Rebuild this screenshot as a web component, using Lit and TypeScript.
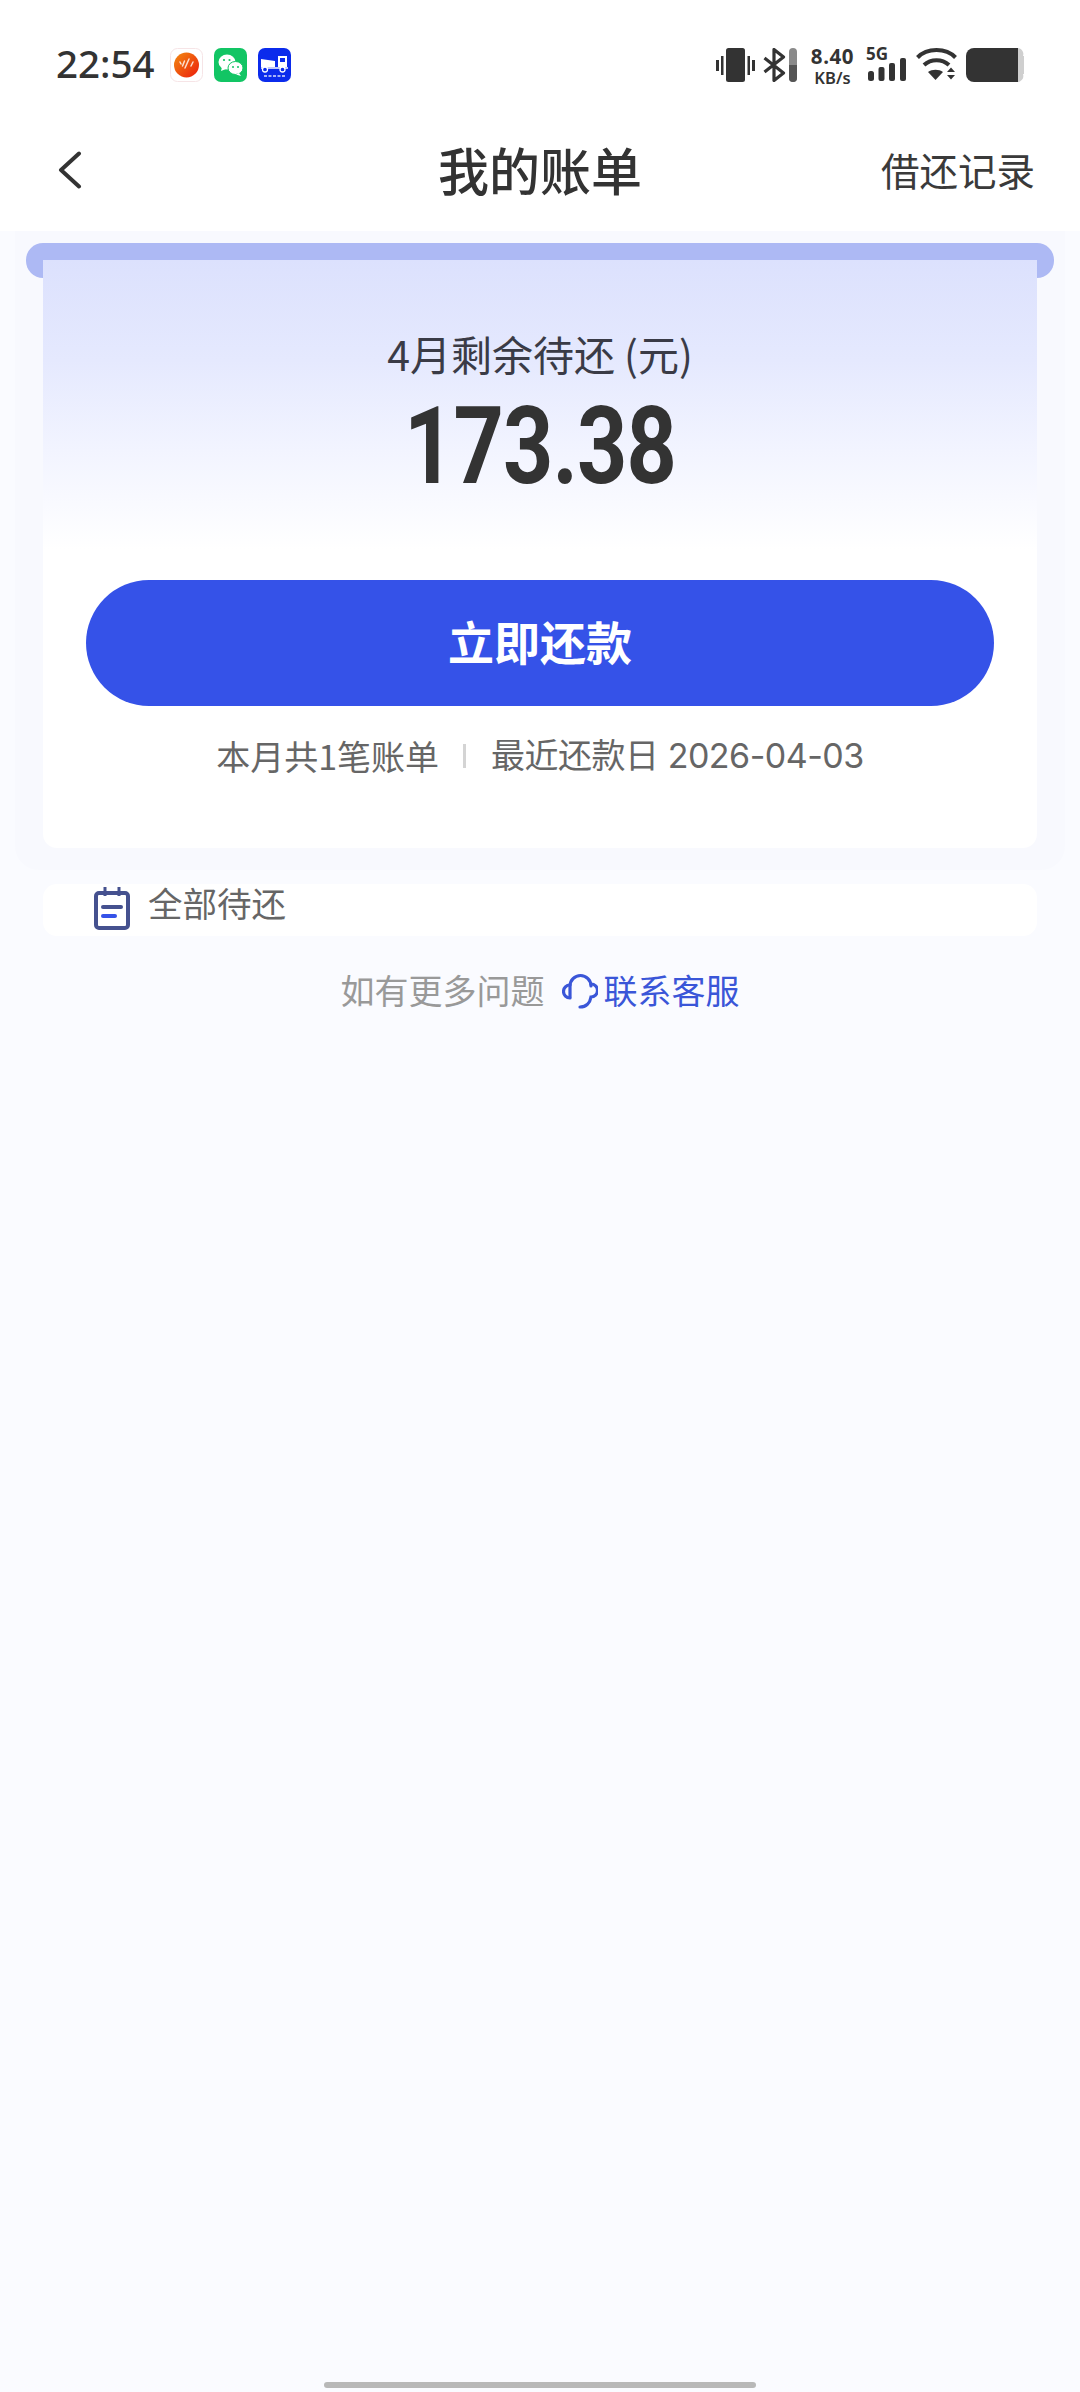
import { LitElement, html, css } from "lit";
import { customElement } from "lit/decorators.js";

@customElement("app-root")
export class AppRoot extends LitElement {
  static styles = css`
    :host { display: block; width: 1080px; height: 2392px; overflow: hidden; background: #fafbff; color: #333; font-family: "Noto Sans CJK SC", "Noto Sans", sans-serif; }
    * { box-sizing: border-box; }
    svg { display: block; flex: none; }
    .page { height: 2392px; display: flex; flex-direction: column; }
    .top { height: 231px; background: #fff; flex: none; }
    .status { height: 130px; padding: 48px 56px 0 56px; display: flex; align-items: flex-start; }
    .time { font-family: "Noto Sans", sans-serif; font-size: 38.500px; font-weight: 500; line-height: 30px; width: 114px; color: #333; }
    .apps { display: flex; gap: 11px; }
    .sys { margin-left: auto; display: flex; align-items: flex-start; }
    .speed { width: 45px; margin: 0 13px 0 13px; display: flex; flex-direction: column; align-items: center; font-family: "Noto Sans", sans-serif; font-weight: 700; color: #333; }
    .speed .a { font-size: 20.500px; line-height: 16px; letter-spacing: .6px; }
    .speed .b { font-size: 16.500px; line-height: 18px; margin-top: 5px; font-weight: 600; }
    .net { position: relative; width: 38px; height: 34px; }
    .net .g { position: absolute; left: -2px; top: -3px; font-family: "Noto Sans", sans-serif; font-size: 17px; line-height: 18px; font-weight: 700; }
    .net svg { position: absolute; left: 0; bottom: 1px; }
    .nav { height: 84px; padding: 0 45px 0 58px; display: flex; align-items: center; position: relative; }
    .title { position: absolute; left: 0; right: 0; top: 0; text-align: center; font-size: 51px; line-height: 78px; font-weight: 500; color: #333; }
    .link { margin-left: auto; font-size: 38.500px; line-height: 78px; margin-bottom: 6px; color: #3a3a3a; }
    .panel { margin: 0 15px; padding: 12px 13px 0; height: 639px; background: #f8f9fe; border-radius: 0 0 24px 24px; flex: none; }
    .roll { height: 35px; margin: 0 -2px; background: #adb9f4; border-radius: 17px; }
    .card { margin: -18px 15px 0; padding: 68px 0 68px; height: 588px; background: linear-gradient(180deg, #dce1fd 0, #e5e9fe 100px, #f2f4ff 190px, #fff 290px); border-radius: 0 0 14px 14px; position: relative; display: flex; flex-direction: column; align-items: center; }
    .label { font-size: 41px; line-height: 50px; color: #3a3b46; white-space: pre; }
    .amount { margin-top: 24px; height: 87px; font-family: Roboto, sans-serif; font-size: 107px; line-height: 90px; font-weight: 700; color: #333; transform: scaleX(.82); letter-spacing: -1px; }
    .pay { margin-top: 91px; width: 908px; height: 126px; flex: none; border-radius: 63px; background: #3552e8; color: #fff; display: flex; align-items: center; justify-content: center; font-size: 46px; font-weight: 700; line-height: 120px; padding-bottom: 7px; }
    .sub { margin-top: 25px; display: flex; align-items: center; font-size: 34px; line-height: 50px; color: #666; }
    .sep { width: 3px; height: 24px; margin: 0 25px 0 24px; background: #d4d4d4; }
    .date { font-family: Inter, "Noto Sans CJK SC", sans-serif; letter-spacing: -.5px; }
    .bills { margin: 14px 43px 0; height: 52px; background: #fff; border-radius: 14px; padding-left: 51px; display: flex; align-items: flex-start; flex: none; }
    .bills svg { margin-top: 3px; }
    .bills span { margin-left: 18px; font-size: 34.500px; line-height: 37px; color: #666; }
    .help { margin-top: 29px; display: flex; align-items: center; justify-content: center; font-size: 34px; line-height: 50px; color: #999; flex: none; }
    .help svg { margin: 2px 6px 0 17px; }
    .help b { font-weight: 400; color: #3a56d8; }
    .home { margin: auto 324px 4px; height: 6px; border-radius: 3px; background: #b8b8b8; flex: none; }
  `;

  render() {
    return html`<div class="page">
      <div class="top">
        <div class="status">
          <div class="time">22:54</div>
          <div class="apps">
            <svg width="33" height="34" viewBox="0 0 33 34"><defs><linearGradient id="o" x1="0" y1="0" x2="1" y2="1"><stop offset="0" stop-color="#f28a10"/><stop offset="1" stop-color="#ec1c0c"/></linearGradient></defs><rect x=".5" y=".5" width="32" height="33" rx="7" fill="#fff" stroke="#f6e4e6"/><circle cx="16.500" cy="17" r="12.500" fill="url(#o)"/><path d="M10 14l1 2M14.500 13l-2 5M19 11l-4 9M23 14l-2 4" stroke="#fff" stroke-width="1.500" stroke-linecap="round" opacity=".8"/></svg>
            <svg width="33" height="34" viewBox="0 0 33 34"><rect width="33" height="34" rx="7" fill="#12c564"/><ellipse cx="13" cy="14" rx="8.500" ry="7.500" fill="#fff"/><path d="M8 19l-1 4 5-2z" fill="#fff"/><ellipse cx="21.500" cy="20" rx="7.500" ry="6.500" fill="#fff" stroke="#12c564" stroke-width="1"/><path d="M25 25l2 3-5-1.500z" fill="#fff"/><circle cx="10" cy="12" r="1.100" fill="#12c564"/><circle cx="15.500" cy="12" r="1.100" fill="#12c564"/><circle cx="19" cy="19" r="1" fill="#12c564"/><circle cx="24" cy="19" r="1" fill="#12c564"/></svg>
            <svg width="33" height="34" viewBox="0 0 33 34"><rect width="33" height="34" rx="7" fill="#0b2bec"/><path d="M3 11l14 2v6H3zM20 8h9v11H20z" fill="#fff"/><path d="M22 10h5v4h-5z" fill="#0b2bec"/><path d="M3 20h27" stroke="#fff" stroke-width="1.500"/><circle cx="7" cy="21.500" r="2.500" fill="#0b2bec" stroke="#fff" stroke-width="1.300"/><circle cx="24.500" cy="21.500" r="2.500" fill="#0b2bec" stroke="#fff" stroke-width="1.300"/><path d="M6 28h21" stroke="#fff" stroke-width="1.500" stroke-dasharray="3 1.500" opacity=".85"/></svg>
          </div>
          <div class="sys">
            <svg width="39" height="34" viewBox="0 0 39 34" fill="#333"><rect x="10" width="19" height="34" rx="2.500"/><rect y="12" width="3" height="11"/><rect x="5" y="8" width="2.500" height="19"/><rect x="31.500" y="8" width="2.500" height="19"/><rect x="36" y="12" width="3" height="11"/></svg>
            <svg style="margin-left:8px" width="23" height="34" viewBox="0 0 23 34" fill="none" stroke="#333" stroke-width="3.200" stroke-linejoin="round"><path d="M1.500 10l19 15L11 32.500V1.500L20.500 9l-19 15"/></svg>
            <svg style="margin-left:3px" width="8" height="34" viewBox="0 0 8 34"><rect width="8" height="34" rx="4" fill="#8a8a8a"/><path d="M0 17h8v13a4 4 0 0 1-4 4 4 4 0 0 1-4-4z" fill="#555"/></svg>
            <div class="speed"><span class="a">8.40</span><span class="b">KB/s</span></div>
            <div class="net"><span class="g">5G</span><svg width="38" height="23" viewBox="0 0 38 23" fill="#333"><rect y="13" width="6" height="10" rx="2.500"/><rect x="10.500" y="9" width="6" height="14" rx="2"/><rect x="21" y="5" width="6" height="18" rx="2"/><rect x="32" width="6" height="23" rx="2"/></svg></div>
            <svg style="margin-left:10px;margin-top:-1px" width="41" height="34" viewBox="0 0 41 34" fill="none" stroke="#333" stroke-width="4"><path d="M1.500 10.500C11 .5 30 .5 39.500 10.500"/><path d="M8 18c7-6.500 18-6.500 25 0"/><path d="M20.500 33l-7.500-8c4-3 11-3 15 0z" transform="translate(-1 0)" fill="#333" stroke="none"/><path d="M31 25l4-4.500 4 4.500zM31 28l4 4.500 4-4.500z" fill="#333" stroke="none"/></svg>
            <svg style="margin-left:9px" width="58" height="34" viewBox="0 0 58 34"><path d="M50 0h1a6 6 0 0 1 6 8h1v18h-1a6 6 0 0 1-6 8h-1z" fill="#cfcfcf"/><path d="M8 0h44v34H8a8 8 0 0 1-8-8V8a8 8 0 0 1 8-8z" fill="#333"/></svg>
          </div>
        </div>
        <div class="nav">
          <svg style="margin-top:-4px" width="24" height="38" viewBox="0 0 24 38" fill="none" stroke="#333" stroke-width="4" stroke-linecap="round" stroke-linejoin="round"><path d="M21 2.500L3 19l18 16.500"/></svg>
          <div class="title">我的账单</div>
          <div class="link">借还记录</div>
        </div>
      </div>
      <div class="panel">
        <div class="roll"></div>
        <div class="card">
          <div class="label">4月剩余待还 (元)</div>
          <div class="amount">173.38</div>
          <div class="pay">立即还款</div>
          <div class="sub"><span>本月共1笔账单</span><i class="sep"></i><span class="date">最近还款日 2026-04-03</span></div>
        </div>
      </div>
      <div class="bills">
        <svg width="36" height="43" viewBox="0 0 36 43" fill="none"><rect x="2" y="6" width="32" height="35" rx="3" stroke="#45518f" stroke-width="4"/><path d="M11 0v9M25 0v9" stroke="#45518f" stroke-width="3"/><path d="M9 20h18" stroke="#45518f" stroke-width="4" stroke-linecap="round"/><path d="M9 29h12" stroke="#3552e8" stroke-width="4" stroke-linecap="round"/></svg>
        <span>全部待还</span>
      </div>
      <div class="help">
        <span>如有更多问题</span>
        <svg width="36" height="36" viewBox="0 0 36 36" fill="none" stroke="#3a56d8" stroke-width="3.200" stroke-linecap="round"><path d="M8 24V13a10.500 10.500 0 0 1 21 0"/><path d="M8 12a6.500 6.500 0 0 0 0 13"/><path d="M29 11a6.500 6.500 0 0 1 0 13c-1 6-5 10-11 10"/></svg>
        <b>联系客服</b>
      </div>
      <div class="home"></div>
    </div>`;
  }
}
